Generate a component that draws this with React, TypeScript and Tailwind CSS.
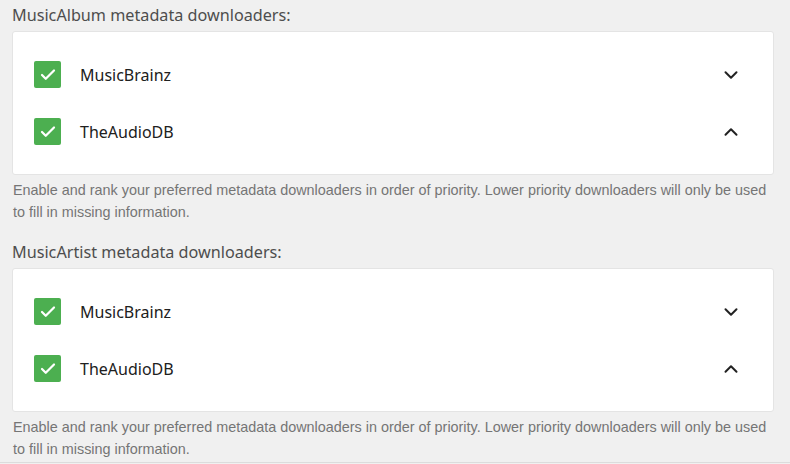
import { Check, ChevronDown, ChevronUp } from "lucide-react";

const downloaders = ["MusicBrainz", "TheAudioDB"];

function DownloaderRow({ name, idx }: { name: string; idx: number }) {
  return (
    <div className="flex h-[57px] items-center pl-[21px] pr-[30px]">
      <div className="flex h-[27px] w-[27px] items-center justify-center rounded-[2px] bg-[#4caf50]">
        <Check className="h-[18px] w-[18px] text-white" strokeWidth={3} />
      </div>
      <span className="ml-[19px] flex-1 text-[16px] text-[#202020]">{name}</span>
      <button className="flex h-6 w-6 items-center justify-center text-[#222]">
        {idx === 0 ? (
          <ChevronDown className="h-[22px] w-[22px]" strokeWidth={2.2} />
        ) : (
          <ChevronUp className="h-[22px] w-[22px]" strokeWidth={2.2} />
        )}
      </button>
    </div>
  );
}

function DownloaderSection({ type }: { type: string }) {
  return (
    <div>
      <h3 className="mb-1 text-[16.2px] leading-6 font-normal text-[#4d4d4d]">{type} metadata downloaders:</h3>
      <div className="rounded-[3px] border border-[#e4e4e4] bg-white py-[14px]">
        {downloaders.map((d, i) => (
          <DownloaderRow key={d} name={d} idx={i} />
        ))}
      </div>
      <div
        className="mt-[4px] pl-px text-[14.4px] leading-[22px] text-[#757575]"
        style={{ fontFamily: '"Liberation Sans", Arial, sans-serif' }}>
        Enable and rank your preferred metadata downloaders in order of priority. Lower priority downloaders will only be
        used to fill in missing information.
      </div>
    </div>
  );
}

export default function App() {
  return (
    <div
      className="min-h-screen bg-[#f0f0f0]"
      style={{ fontFamily: '"Noto Sans", "Open Sans", sans-serif' }}>
      <div className="flex flex-col gap-[17px] border-b border-[#dcdcdc] pt-[3px] pr-4 pb-[2px] pl-3">
        <DownloaderSection type="MusicAlbum" />
        <DownloaderSection type="MusicArtist" />
      </div>
    </div>
  );
}
